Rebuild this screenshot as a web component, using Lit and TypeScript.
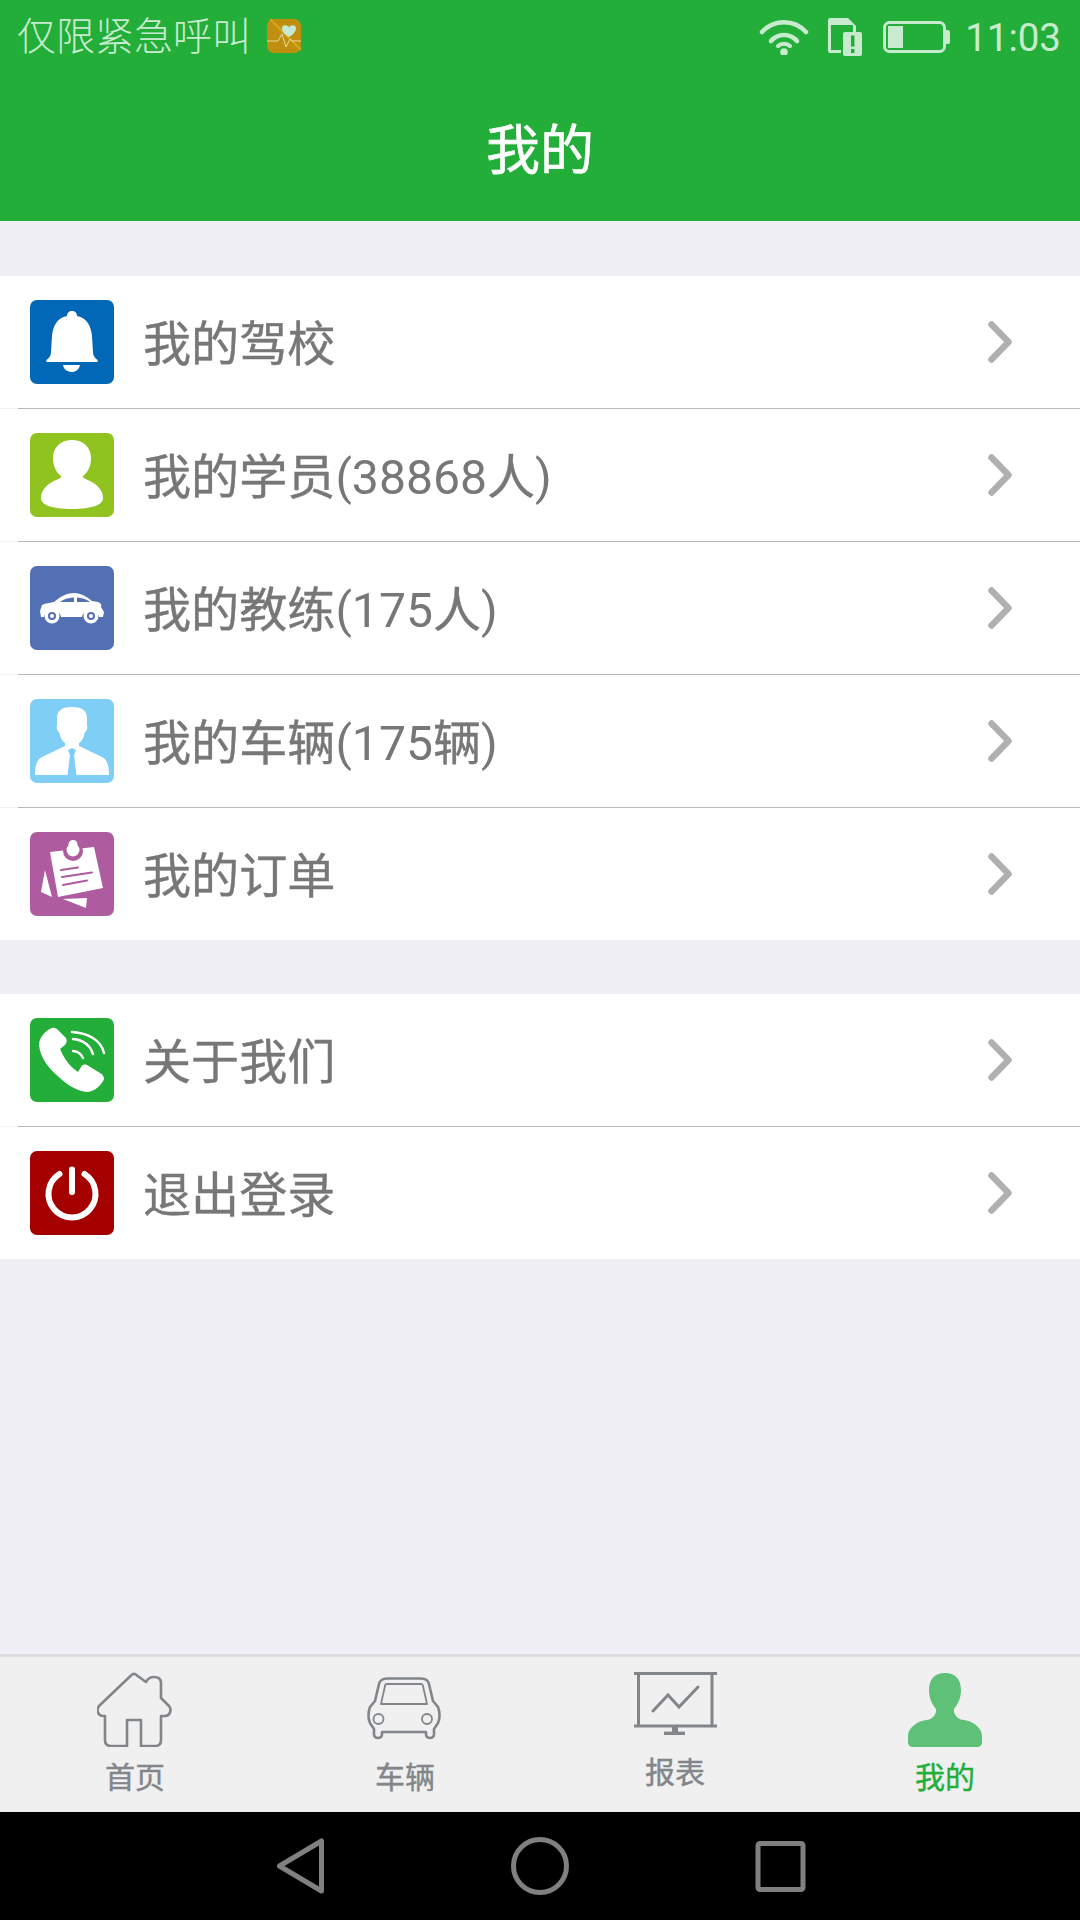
import { LitElement, html, css, svg } from "lit";
import { customElement } from "lit/decorators.js";

const bell = svg`
  <path fill="#fff" d="M42 11c-3 0-5 2-5 5C27 18 23 26 22 36L21 52C21 56 19 58 16.500 60Q15.500 62 18 62H66Q68.500 62 67.500 60C65 58 63 56 63 52L62 36C61 26 57 18 47 16C47 13 45 11 42 11Z"/>
  <path fill="#fff" d="M33 65H50C49 70 45 72 42 72C38 72 34 70 33 65Z"/>`;
const student = svg`
  <path fill="#fff" d="M42 7C31 7 23 14 23 25C23 33 26 39 31 43C32 45 28 46 24 48C16 52 11 58 11 65C11 72 22 76 42 76C62 76 73 72 73 65C73 58 68 52 60 48C56 46 52 45 53 43C58 39 61 33 61 25C61 14 53 7 42 7Z"/>`;
const sedan = svg`
  <path fill="#fff" d="M10 45L12 39C16 37 20 37 24 36C30 31 36 27 44 27C51 27 57 31 62 35L68 36C71 37 72 39 71 41L74 46L73 51H69C68 43 53 43 52 51H31C30 43 15 43 14 51H11Z"/>
  <path fill="#5470b4" d="M30 36C34 33 38 32 44 31.500V36ZM47 31.500C52 32 56 33 60 36H47Z"/>
  <circle cx="22" cy="50" r="7.500" fill="#fff"/><circle cx="22" cy="50" r="4" fill="#5470b4"/><circle cx="22" cy="50" r="2" fill="#fff"/>
  <circle cx="61" cy="50" r="7.500" fill="#fff"/><circle cx="61" cy="50" r="4" fill="#5470b4"/><circle cx="61" cy="50" r="2" fill="#fff"/>`;
const coach = svg`
  <path fill="#fff" d="M42 8C33 8 27 11 27 19V26C26 28 27 32 29 33C30 38 32 42 35 44V47L12 58C7 61 5 65 5 76H79C79 65 77 61 72 58L49 47V44C52 42 54 38 55 33C57 32 58 28 57 26V19C57 11 51 8 42 8Z"/>
  <path fill="#7fcef5" d="M38 51L42 49L46 51L44 56L46.500 76H37.500L40 56Z"/>`;
const note = svg`
  <path fill="#fff" d="M15 38L11 60L22 65ZM33 67L57 66L56 76Z"/>
  <path fill="#fff" d="M20 20L64 15L73 56L28 65Z"/>
  <path stroke="#ae5c9f" stroke-width="2" stroke-linecap="round" d="M31 38L48 35.500M32 45L62 40.500M33 53L57 48.500"/>
  <circle cx="43" cy="19" r="10" fill="#ae5c9f"/><circle cx="43" cy="18" r="6.500" fill="#fff"/><circle cx="43" cy="12.500" r="4.500" fill="#fff"/>`;
const phone = svg`
  <path fill="#fff" d="M22 10C18 11 9 18 9 27C10 40 20 52 30 60C38 68 50 74 58 74C66 73 72 66 74 61C74 58 72 56 70 55L57 47C54 46 52 47 51 49L48 54C42 50 35 43 30 31L35 27C37 25 37 22 36 20L27 11C25 10 23 9.500 22 10Z"/>
  <path fill="none" stroke="#fff" stroke-width="2.400" stroke-linecap="round" d="M42 14C58 15 71 22 74 35M43 21C53 22 60 27 63 36M43 33C48 33 51 36 53 40"/>`;
const power = svg`
  <path fill="none" stroke="#fff" stroke-width="6" stroke-linecap="round" d="M29.500 23A23.500 23.500 0 1 0 54.500 23"/>
  <path fill="none" stroke="#fff" stroke-width="6" stroke-linecap="round" d="M42 18.500V41"/>`;

const groups = [
  [
    { t: "我的驾校", c: "#0068b7", i: bell },
    { t: "我的学员(38868人)", c: "#8fc31f", i: student },
    { t: "我的教练(175人)", c: "#5470b4", i: sedan },
    { t: "我的车辆(175辆)", c: "#7fcef5", i: coach },
    { t: "我的订单", c: "#ae5c9f", i: note },
  ],
  [
    { t: "关于我们", c: "#23ae39", i: phone },
    { t: "退出登录", c: "#a40000", i: power },
  ],
];

// Latin runs stay at the regular weight; only the CJK runs get the heavier stroke.
const runs = (text: string) =>
  text
    .split(/([\x00-\x7f]+)/)
    .filter(Boolean)
    .map((part) => (/^[\x00-\x7f]/.test(part) ? html`<span>${part}</span>` : html`<span class="cjk">${part}</span>`));

@customElement("app-root")
export class AppRoot extends LitElement {
  static styles = css`
    :host { display: flex; flex-direction: column; width: 1080px; height: 1920px; background: #efeff5;
      font-family: Roboto, "Noto Sans CJK SC", sans-serif; overflow: hidden; }
    svg { display: block; flex: none; }
    .head { background: #23ae39; height: 221px; display: flex; flex-direction: column; }
    .status { height: 74px; display: flex; align-items: center; color: #c8ebcf; padding: 0 19px 0 17px; }
    .carrier { font-size: 39px; font-weight: 300; line-height: 74px; white-space: nowrap; }
    .app { margin-left: 16px; margin-top: -2px; }
    .spacer { flex: 1; }
    .sim { margin-left: 19px; }
    .batt { margin-left: 21px; }
    .time { margin-left: 15px; font-size: 38.500px; font-weight: 400; }
    .title { flex: 1; display: flex; align-items: center; justify-content: center; color: #fff;
      font-size: 54px; -webkit-text-stroke: 0.6px #fff; padding-bottom: 2px; }
    .main { flex: 1; padding-top: 55px; display: flex; flex-direction: column; gap: 54px; }
    .group { background: #fff; }
    .row { height: 132px; display: flex; align-items: center; padding: 0 68px 0 30px; }
    .sep { height: 1px; background: linear-gradient(to right, #f2f2f2 18px, #b9b9b9 18px); }
    .tile { width: 84px; height: 84px; border-radius: 7px; }
    .label { margin-left: 29px; padding-bottom: 4px; flex: 1; font-size: 48.100px; color: #777; white-space: nowrap; }
    .cjk { -webkit-text-stroke: 0.4px #777; }
    .tabs { height: 158px; background: #f0f0f0; border-top: 3px solid #ddd; display: grid;
      grid-template-columns: repeat(4, 1fr); box-sizing: border-box; }
    .tab { display: flex; flex-direction: column; align-items: center; color: #82868a;
      font-size: 30px; line-height: 34px; -webkit-text-stroke: 0.4px currentColor; }
    .home { margin-top: 15px; margin-left: -2px; } .homel { margin-top: 14px; }
    .car { margin-top: 20px; margin-left: -2px; } .carl { margin-top: 21px; }
    .mon { margin-top: 15px; } .monl { margin-top: 21px; }
    .me { margin-top: 16px; } .mel { margin-top: 14px; color: #23ae39; }
    .nav { height: 108px; background: #000; display: flex; align-items: center; }
  `;

  render() {
    return html`
      <div class="head">
        <div class="status">
          <span class="carrier">仅限紧急呼叫</span>
          <svg class="app" width="34" height="34" viewBox="0 0 34 34">
            <rect width="34" height="34" rx="7" fill="#c08f10"/>
            <path d="M3 0L34 31" stroke="#d8a818" stroke-width="2"/>
            <path d="M0 22H11L15 15L19 28L23 20L25 22H34" fill="none" stroke="#e8d9a0" stroke-width="1"/>
            <path d="M22 18C17 15 15 12 15 9C15 6 19 5 22 8C25 5 29 6 29 9C29 12 27 15 22 18Z" fill="#c4e8d4"/>
          </svg>
          <div class="spacer"></div>
          <svg width="50" height="36" viewBox="0 0 50 36" fill="none" stroke="#c8ebcf" stroke-width="4.500" stroke-linecap="round">
            <path d="M3 13C15 0 35 0 47 13"/><path d="M12 22C19 14 31 14 38 22" /><path d="M19 27C22 24 28 24 31 27" stroke-width="4"/>
            <circle cx="25" cy="33" r="3.800" fill="#c8ebcf" stroke="none"/>
          </svg>
          <svg class="sim" width="34" height="38" viewBox="0 0 34 38">
            <path fill="#c8ebcf" fill-rule="evenodd" d="M2 0H20L28 8V14H15C14 14 13 15 13 16V35H2C1 35 0 34 0 33V2C0 1 1 0 2 0ZM3 7V32H13V16C13 15 14 14 15 14H25V7Z"/>
            <rect x="15" y="14" width="19" height="24" rx="2" fill="#c8ebcf"/>
            <rect x="23" y="17.500" width="3.500" height="11" fill="#23ae39"/><rect x="23" y="31" width="3.500" height="4" fill="#23ae39"/>
          </svg>
          <svg class="batt" width="67" height="32" viewBox="0 0 67 32">
            <rect x="1.500" y="1.500" width="60" height="29" rx="5" fill="none" stroke="#c8ebcf" stroke-width="3"/>
            <rect x="5" y="5" width="15" height="22" fill="#c8ebcf"/>
            <path d="M63 9H65C66 9 67 10 67 11V21C67 22 66 23 65 23H63Z" fill="#c8ebcf"/>
          </svg>
          <span class="time">11:03</span>
        </div>
        <div class="title">我的</div>
      </div>

      <div class="main">
        ${groups.map(
          (g) => html`<div class="group">
            ${g.map(
              (r, i) => html`
                ${i ? html`<div class="sep"></div>` : ""}
                <div class="row">
                  <svg class="tile" viewBox="0 0 84 84" style="background:${r.c}">${r.i}</svg>
                  <span class="label">${runs(r.t)}</span>
                  <svg width="24" height="42" viewBox="0 0 24 42" fill="none" stroke="#b0b0b0" stroke-width="6.500" stroke-linecap="round" stroke-linejoin="round">
                    <path d="M3.500 3.500L20.500 21L3.500 38.500"/>
                  </svg>
                </div>`
            )}
          </div>`
        )}
      </div>

      <div class="tabs">
        <div class="tab">
          <svg class="home" width="75" height="75" viewBox="0 0 75 75" fill="none" stroke="#82868a" stroke-width="2.600" stroke-linejoin="round">
            <path d="M34 3.500C36 1.300 38 1.300 40 3.500L49 10C51 6 53 5 57 5C61 5 64 7 64 11V26L72 34C75 38 73 44 68 44H64V68C64 72 62 74 58 74H44V48H30V74H14C10 74 8 72 8 68V44H6C1 44 -1 38 2 34Z"/>
          </svg>
          <span class="homel">首页</span>
        </div>
        <div class="tab">
          <svg class="car" width="74" height="63" viewBox="0 0 74 63" fill="none" stroke="#82868a" stroke-width="2.600" stroke-linejoin="round">
            <path d="M20 1.500H54C58 1.500 61 3 62 7L66 24L71 30C73 35 73 42 71 46L67 52V58C66 62 60 62 59 58V55H15V58C14 62 8 62 7 58V52L3 46C1 42 1 35 3 30L8 24L12 7C13 3 16 1.500 20 1.500Z"/>
            <path stroke-width="1.800" d="M14 27H60L56 9C56 8 55 7 54 7H20C19 7 18 8 18 9Z"/>
            <circle cx="11.500" cy="42" r="5" stroke-width="1.800"/><circle cx="60" cy="42" r="5" stroke-width="1.800"/>
          </svg>
          <span class="carl">车辆</span>
        </div>
        <div class="tab">
          <svg class="mon" width="83" height="63" viewBox="0 0 83 63" fill="none" stroke="#82868a">
            <path stroke-width="3" d="M0 1.500H83M0 54H83M4.500 1.500V54M78 1.500V54"/>
            <path stroke-width="6" d="M41 55V60"/><path stroke-width="3.400" d="M30 61.300H51"/>
            <path stroke-width="3" stroke-linecap="round" d="M19 39L34 23L45 35L64 15"/>
          </svg>
          <span class="monl">报表</span>
        </div>
        <div class="tab">
          <svg class="me" width="74" height="74" viewBox="0 0 74 74">
            <path fill="#5fc077" d="M37 0C26 0 21 7 21 17C21 25 24 31 28 36C29 40 25 47 18 47C9 48 0 55 0 63V69C0 72 2 74 5 74H69C72 74 74 72 74 69V63C74 55 65 48 56 47C49 47 45 40 46 36C50 31 53 25 53 17C53 7 48 0 37 0Z"/>
          </svg>
          <span class="mel">我的</span>
        </div>
      </div>

      <div class="nav">
        <svg width="1080" height="108" viewBox="0 0 1080 108" fill="none" stroke="#808080" stroke-width="5" stroke-linejoin="round">
          <path d="M279.500 54L321.500 29V79Z"/>
          <circle cx="540" cy="54" r="26.500"/>
          <rect x="758" y="31.500" width="45" height="46" rx="2"/>
        </svg>
      </div>
    `;
  }
}
